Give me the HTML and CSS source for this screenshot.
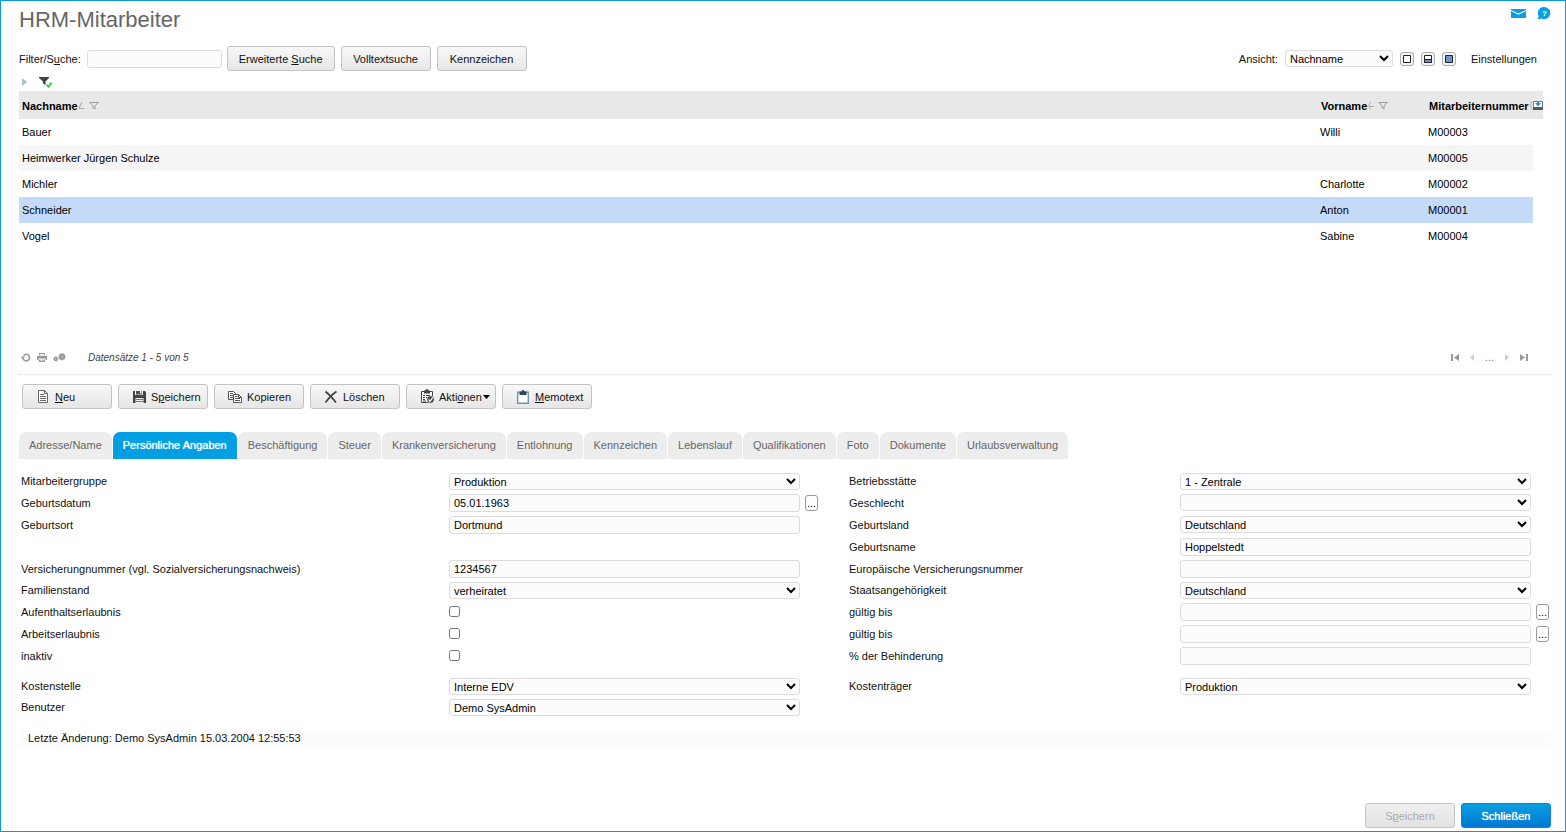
FILE: index.html
```html
<!DOCTYPE html>
<html lang="de">
<head>
  <meta charset="UTF-8">
  <title>HRM-Mitarbeiter</title>
  <meta name="viewport" content="width=device-width, initial-scale=1">
  <link rel="stylesheet" href="styles.css">
</head>
<body>

<div class="fenster">

  <header class="kopf">
    <h1>HRM-Mitarbeiter</h1>
    <div class="kopf-icons">
      <button class="icon-btn" aria-label="E-Mail">
        <svg width="15" height="9" viewBox="0 0 15 9"><path fill="#0a9fe0" d="M0 0h15v1L7.500 4.600 0 1z"/><path fill="#0a9fe0" d="M0 2l7.500 3.800L15 2v7H0z"/></svg>
      </button>
      <button class="icon-btn" aria-label="Hilfe">
        <svg width="14" height="13" viewBox="0 0 14 13"><path fill="#0a9fe0" d="M7.500 0a6 6 0 1 1-2.800 11.400L.5 12.500l1.300-3.300A6 6 0 0 1 7.500 0z"/><text x="7.500" y="9" text-anchor="middle" class="frage">?</text></svg>
      </button>
    </div>
  </header>

  <!-- Suche und Ansicht -->
  <div class="suchleiste">
    <label for="suche">Filter/S<u>u</u>che:</label>
    <input type="text" id="suche" class="feld suche">
    <button class="btn">Erweiterte <u>S</u>uche</button>
    <button class="btn">Volltextsuche</button>
    <button class="btn">Kennzeichen</button>

    <div class="ansicht">
      <label for="ansicht">Ansicht:</label>
      <select id="ansicht" class="feld"><option>Nachname</option></select>
      <div class="layouts">
        <button class="layout-btn" aria-label="Nur Liste"><svg width="8" height="8" viewBox="0 0 8 8"><path fill="#fff" stroke="#222" d="M.5.5h7v7h-7z"/></svg></button>
        <button class="layout-btn" aria-label="Geteilt"><svg width="8" height="8" viewBox="0 0 8 8"><path fill="#fff" stroke="#222" d="M.5.5h7v7h-7z"/><path fill="#6c8fc8" stroke="#222" d="M.5 4.500h7v3h-7z"/></svg></button>
        <button class="layout-btn" aria-label="Nur Maske"><svg width="8" height="8" viewBox="0 0 8 8"><path fill="#6c94cf" stroke="#222" d="M.5.5h7v7h-7z"/></svg></button>
      </div>
      <a href="#" class="einstellungen">Einstellungen</a>
    </div>
  </div>

  <div class="filterzeile">
    <svg width="5" height="8" viewBox="0 0 5 8"><path fill="#a9c0d0" d="M0 0l5 4-5 4z"/></svg>
    <svg width="14" height="12" viewBox="0 0 14 12"><path fill="#444" d="M0 1h10v1L6.500 5.500V9L4 7.500v-2L0 2z"/><path fill="none" stroke="#1fe01f" stroke-width="1.800" d="M7.500 8.500l2 2.300L12.500 6.500"/></svg>
  </div>

  <!-- Liste -->
  <div class="liste">
    <table>
      <colgroup><col><col class="schmal"><col class="schmal"><col class="spalten"></colgroup>
      <thead>
        <tr>
          <th>
            <div class="titel">
              <span>Nachname</span>
              <svg width="7" height="8" viewBox="0 0 7 8"><path fill="none" stroke="#aaa" d="M4 0L1 6.500h5"/></svg>
              <svg class="trichter" width="10" height="8" viewBox="0 0 10 8"><path fill="none" stroke="#999" d="M.8.500h8.400L6 4v3L4 5.800V4z"/></svg>
            </div>
          </th>
          <th>
            <div class="titel">
              <span>Vorname</span>
              <svg width="7" height="8" viewBox="0 0 7 8"><path fill="none" stroke="#aaa" d="M4 0Q0 3.500 4 7.500M2 4.500h5"/></svg>
              <svg class="trichter" width="10" height="8" viewBox="0 0 10 8"><path fill="none" stroke="#999" d="M.8.500h8.400L6 4v3L4 5.800V4z"/></svg>
            </div>
          </th>
          <th>
            <div class="titel">
              <span>Mitarbeiternummer</span>
              <svg width="4" height="9" viewBox="0 0 4 9"><path fill="none" stroke="#aaa" d="M3 0Q0 4 3 9"/></svg>
            </div>
          </th>
          <th class="spalten-icon">
            <svg width="10" height="9" viewBox="0 0 10 9"><path fill="#fff" stroke="#778" d="M.5.500h9v6h-9z"/><path fill="#1d9ad6" d="M4 0h2v2h2L5 5.500 2 2h2z"/><path fill="#556" d="M0 6h10v3H0z"/></svg>
          </th>
        </tr>
      </thead>
      <tbody>
        <tr><td>Bauer</td><td>Willi</td><td>M00003</td></tr>
        <tr><td>Heimwerker Jürgen Schulze</td><td></td><td>M00005</td></tr>
        <tr><td>Michler</td><td>Charlotte</td><td>M00002</td></tr>
        <tr class="gewaehlt"><td>Schneider</td><td>Anton</td><td>M00001</td></tr>
        <tr><td>Vogel</td><td>Sabine</td><td>M00004</td></tr>
      </tbody>
    </table>
  </div>

  <div class="listenfuss">
    <div class="fuss-icons">
      <button class="icon-btn" aria-label="Aktualisieren"><svg width="10" height="9" viewBox="0 0 10 9"><path fill="none" stroke="#999" stroke-width="1.600" d="M2 5.500a3.300 3.300 0 1 0 .6-3"/><path fill="#999" d="M0 3.500h4L2 6.500z"/></svg></button>
      <button class="icon-btn" aria-label="Drucken"><svg width="10" height="9" viewBox="0 0 10 9"><path fill="#999" d="M2 0h6v2.500H2zM0 3h10v4H8.500V5.500h-7V7H0zM2 6.500h6V9H2z"/><path fill="#fff" d="M3 1h4v1.500H3zM3 6.500h4v1H3z"/></svg></button>
      <button class="icon-btn" aria-label="Verarbeitung"><svg width="13" height="9" viewBox="0 0 13 9"><circle cx="2.800" cy="6" r="2.200" fill="#999" stroke="#aaa" stroke-dasharray="1 1"/><circle cx="9" cy="3.800" r="3.200" fill="#999" stroke="#aaa" stroke-dasharray="1 1"/><circle cx="2.800" cy="6" r=".7" fill="#ccc"/><circle cx="9" cy="3.800" r="1" fill="#bbb"/></svg></button>
    </div>
    <i class="anzahl">Datensätze 1 - 5 von 5</i>
    <div class="blaettern">
      <button class="icon-btn" aria-label="Erste Seite"><svg width="8" height="7" viewBox="0 0 8 7"><path fill="#999" d="M0 0h2v7H0zM8 0v7L3 3.500z"/></svg></button>
      <button class="icon-btn" aria-label="Vorherige Seite"><svg width="4" height="7" viewBox="0 0 4 7"><path fill="#ccc" d="M4 0v7L0 3.500z"/></svg></button>
      <span>...</span>
      <button class="icon-btn" aria-label="Nächste Seite"><svg width="4" height="7" viewBox="0 0 4 7"><path fill="#ccc" d="M0 0v7l4-3.500z"/></svg></button>
      <button class="icon-btn" aria-label="Letzte Seite"><svg width="8" height="7" viewBox="0 0 8 7"><path fill="#999" d="M6 0h2v7H6zM0 0v7l5-3.500z"/></svg></button>
    </div>
  </div>

  <!-- Aktionen zum Datensatz -->
  <div class="werkzeuge">
    <button class="btn mit-icon">
      <svg width="16" height="14" viewBox="0 0 16 14"><path fill="#fff" stroke="#666" d="M2.500.500h6l3 3v9h-9z"/><path fill="none" stroke="#666" d="M8.500.500v3h3M4 4.500h4M4 6.500h6M4 8.500h6M4 10.500h6"/></svg><span><u>N</u>eu</span>
    </button>
    <button class="btn mit-icon">
      <svg width="16" height="14" viewBox="0 0 16 14"><path fill="#444" d="M1 1h2v4h8V1h2l1 1v11H1z"/><path fill="#555" d="M4 1h6v3.500H4z"/><path fill="#eee" d="M8 1h1.500v2.500H8zM3.500 8h8v5h-8z"/><path stroke="#777" d="M4 9.500h7M4 11.500h7"/></svg><span>S<u>p</u>eichern</span>
    </button>
    <button class="btn mit-icon">
      <svg width="16" height="14" viewBox="0 0 16 14"><path fill="#fff" stroke="#555" d="M.5 1.500h5l2 2v6h-7z"/><path stroke="#555" d="M2 3.500h3M2 5.500h4M2 7.500h3"/><path fill="#fff" stroke="#555" d="M5.500 4.500h5l3 3v5h-8z"/><path fill="none" stroke="#555" d="M10.500 4.500v3h3M7 6.500h2.500M7 8.500h5M7 10.500h5"/></svg><span>Kopieren</span>
    </button>
    <button class="btn mit-icon">
      <svg width="16" height="14" viewBox="0 0 16 14"><path fill="none" stroke="#444" stroke-width="1.800" d="M1.500 1.500Q6 5 12 12.500M12.500 1.500Q7 5 1.500 12.500"/></svg><span>Löschen</span>
    </button>
    <button class="btn mit-icon">
      <svg width="16" height="15" viewBox="0 0 16 15"><path fill="#fff" stroke="#444" d="M1.500 2.500h11v11h-11z"/><path fill="#444" d="M4 1.500h1.500a1.500 1.500 0 0 1 3 0H10v3H4z"/><path stroke="#444" d="M3 6.500h2M6 6.500h4M3 8.500h2M6 8.500h2M3 10.500h2M3 12h3"/><circle cx="10.500" cy="10.500" r="3.700" fill="#444" stroke="#f2f2f2" stroke-width=".6"/><path fill="none" stroke="#fff" stroke-width="1.200" d="M8.500 10.500l1.600 1.700 2.600-3.500"/></svg><span>Akti<u>o</u>nen</span><svg class="pfeil" width="7" height="4" viewBox="0 0 7 4"><path d="M0 0h7L3.500 4z"/></svg>
    </button>
    <button class="btn mit-icon">
      <svg width="16" height="14" viewBox="0 0 16 14"><path fill="#fff" stroke="#7890a8" stroke-width="1.400" d="M1.700 2.200h10.600v11H1.700z"/><path fill="#2d4560" d="M3.500 1.500h2a1.500 1.500 0 0 1 3 0h2V5h-7z"/></svg><span><u>M</u>emotext</span>
    </button>
  </div>

  <nav class="reiter">
    <a href="#">Adresse/Name</a>
    <a href="#" class="aktiv">Persönliche Angaben</a>
    <a href="#">Beschäftigung</a>
    <a href="#">Steuer</a>
    <a href="#">Krankenversicherung</a>
    <a href="#">Entlohnung</a>
    <a href="#">Kennzeichen</a>
    <a href="#">Lebenslauf</a>
    <a href="#">Qualifikationen</a>
    <a href="#">Foto</a>
    <a href="#">Dokumente</a>
    <a href="#">Urlaubsverwaltung</a>
  </nav>

  <!-- Persönliche Angaben -->
  <form class="maske">
    <label class="links" for="gruppe">Mitarbeitergruppe</label>
    <select id="gruppe" class="feld"><option>Produktion</option></select>
    <label class="rechts" for="betrieb">Betriebsstätte</label>
    <select id="betrieb" class="feld"><option>1 - Zentrale</option></select>

    <label class="links" for="gebdatum">Geburtsdatum</label>
    <input type="text" id="gebdatum" class="feld" value="05.01.1963">
    <button type="button" class="mehr" aria-label="Datum wählen">...</button>
    <label class="rechts" for="geschlecht">Geschlecht</label>
    <select id="geschlecht" class="feld"><option></option></select>

    <label class="links" for="gebort">Geburtsort</label>
    <input type="text" id="gebort" class="feld" value="Dortmund">
    <label class="rechts" for="gebland">Geburtsland</label>
    <select id="gebland" class="feld"><option>Deutschland</option></select>

    <label class="rechts" for="gebname">Geburtsname</label>
    <input type="text" id="gebname" class="feld" value="Hoppelstedt">

    <label class="links" for="versnr">Versicherungnummer (vgl. Sozialversicherungsnachweis)</label>
    <input type="text" id="versnr" class="feld" value="1234567">
    <label class="rechts" for="euversnr">Europäische Versicherungsnummer</label>
    <input type="text" id="euversnr" class="feld">

    <label class="links" for="famstand">Familienstand</label>
    <select id="famstand" class="feld"><option>verheiratet</option></select>
    <label class="rechts" for="staat">Staatsangehörigkeit</label>
    <select id="staat" class="feld"><option>Deutschland</option></select>

    <label class="links" for="aufenthalt">Aufenthaltserlaubnis</label>
    <input type="checkbox" id="aufenthalt">
    <label class="rechts" for="gueltig1">gültig bis</label>
    <input type="text" id="gueltig1" class="feld">
    <button type="button" class="mehr" aria-label="Datum wählen">...</button>

    <label class="links" for="arbeit">Arbeitserlaubnis</label>
    <input type="checkbox" id="arbeit">
    <label class="rechts" for="gueltig2">gültig bis</label>
    <input type="text" id="gueltig2" class="feld">
    <button type="button" class="mehr" aria-label="Datum wählen">...</button>

    <label class="links" for="inaktiv">inaktiv</label>
    <input type="checkbox" id="inaktiv">
    <label class="rechts" for="behinderung">% der Behinderung</label>
    <input type="text" id="behinderung" class="feld">

    <div class="abstand"></div>

    <label class="links" for="kostenstelle">Kostenstelle</label>
    <select id="kostenstelle" class="feld"><option>Interne EDV</option></select>
    <label class="rechts" for="kostentraeger">Kostenträger</label>
    <select id="kostentraeger" class="feld"><option>Produktion</option></select>

    <label class="links" for="benutzer">Benutzer</label>
    <select id="benutzer" class="feld"><option>Demo SysAdmin</option></select>
  </form>

  <p class="aenderung">Letzte Änderung: Demo SysAdmin 15.03.2004 12:55:53</p>

  <footer class="fuss">
    <button class="btn" disabled>S<u>p</u>eichern</button>
    <button class="btn primaer">Schließen</button>
  </footer>

</div>

</body>
</html>
```
FILE: styles.css
```css
* {
  box-sizing: border-box;
}

body {
  margin: 0;
  font-family: Arial, "Liberation Sans", sans-serif;
  font-size: 11px;
  color: #111;
  background: #fff;
}

button, input, select {
  font-family: inherit;
  font-size: 11px;
  margin: 0;
}

svg {
  display: block;
  flex: none;
}

a {
  color: inherit;
  text-decoration: none;
}

.fenster {
  display: flex;
  flex-direction: column;
  min-height: 100vh;
  border: 1px solid #0a9ad7;
  padding: 6px 14px 3px 18px;
}

/* Kopf */
.kopf {
  display: flex;
  justify-content: space-between;
  align-items: flex-start;
}

.kopf h1 {
  margin: 0;
  font-size: 22px;
  line-height: 26px;
  font-weight: normal;
  color: #666;
}

.kopf-icons {
  display: flex;
  align-items: center;
  gap: 11px;
}

.icon-btn {
  border: none;
  background: none;
  padding: 0;
  cursor: pointer;
}

.frage {
  font-size: 8px;
  font-weight: bold;
  fill: #fff;
}

/* Felder und Knöpfe */
.feld {
  width: 100%;
  height: 18px;
  border: 1px solid #dcdcdc;
  border-radius: 3px;
  background-color: #fcfcfc;
  color: #000;
  padding: 0 4px;
}

select.feld {
  height: 17px;
  padding: 0;
}

.btn {
  height: 25px;
  min-width: 90px;
  padding: 0 11px;
  border: 1px solid #c3c3c3;
  border-radius: 3px;
  background: linear-gradient(#f8f8f8, #e6e6e6);
  color: #111;
  cursor: pointer;
}

.btn:hover {
  background: #eee;
}

.btn:disabled {
  color: #aaa;
  background: linear-gradient(#f0f0f0, #e2e2e2);
  cursor: default;
}

.btn.primaer {
  border-color: #0a84cc;
  background: linear-gradient(#0a9fe0, #0077d4);
  color: #fff;
  text-shadow: 0 0 1px #fff;
}

.btn.mit-icon {
  display: flex;
  align-items: center;
  gap: 3px;
  padding: 0 0 0 13px;
}

/* Suchleiste */
.suchleiste {
  display: flex;
  align-items: center;
  margin-top: 13px;
}

.suchleiste .btn {
  margin-right: 6px;
}

.suche {
  width: 135px;
  margin: 0 5px 0 6px;
}

.ansicht {
  display: flex;
  align-items: center;
  margin-left: auto;
  padding-right: 14px;
}

.ansicht select.feld {
  width: 108px;
  margin: 0 7px;
}

.layouts {
  display: flex;
  gap: 7px;
  margin-right: 15px;
}

.layout-btn {
  display: flex;
  align-items: center;
  justify-content: center;
  width: 14px;
  height: 14px;
  padding: 0;
  border: 1px solid #aaa;
  border-radius: 3px;
  background: #f4f4f4;
}

.filterzeile {
  display: flex;
  align-items: center;
  gap: 12px;
  height: 20px;
  padding: 2px 3px 0;
}

/* Liste */
.liste {
  min-height: 254px;
  padding-right: 8px;
}

.liste table {
  width: 100%;
  table-layout: fixed;
  border-collapse: collapse;
}

.schmal {
  width: 108px;
}

.spalten {
  width: 10px;
}

.liste th {
  height: 28px;
  padding: 1px 0 0 4px;
  background: #e8e8e8;
  color: #000;
  text-align: left;
  white-space: nowrap;
}

.liste th:first-child {
  padding-left: 3px;
}

.titel {
  display: flex;
  align-items: center;
}

.titel .trichter {
  margin-left: 4px;
}

.liste th.spalten-icon {
  padding: 0;
}

.liste td {
  height: 26px;
  padding: 0 3px;
  color: #000;
}

.liste tr:nth-child(even) td {
  background: #f5f5f5;
}

.liste tr.gewaehlt td {
  background: #c4daf9;
}

.listenfuss {
  display: flex;
  align-items: center;
  height: 30px;
  padding: 0 23px 5px 2px;
  border-bottom: 1px dotted #ddd;
}

.fuss-icons {
  display: flex;
  align-items: center;
  gap: 6px;
  margin-right: 22px;
}

.anzahl {
  font-size: 10px;
  color: #444;
}

.blaettern {
  display: flex;
  align-items: center;
  gap: 11px;
  margin-left: auto;
  color: #777;
}

/* Werkzeugleiste */
.werkzeuge {
  display: flex;
  gap: 6px;
  padding: 9px 3px 0;
}

.werkzeuge .pfeil {
  margin-left: -2px;
}

/* Reiter */
.reiter {
  display: flex;
  gap: 1px;
  margin-top: 23px;
}

.reiter a {
  padding: 0 10px;
  line-height: 27px;
  border-radius: 7px 7px 0 0;
  background: #ededed;
  color: #666;
  white-space: nowrap;
}

.reiter a.aktiv {
  background: #009ee3;
  color: #fff;
  text-shadow: 0 0 1px #fff;
}

/* Maske */
.maske {
  display: grid;
  grid-template-columns: 428fr 351fr 49px 331fr 351fr 20px;
  row-gap: 4px;
  align-items: start;
  padding-left: 2px;
  margin-top: 14px;
}

.maske label {
  align-self: end;
  line-height: 17px;
  white-space: nowrap;
}

.maske .links {
  grid-column: 1;
}

.maske .rechts {
  grid-column: 4;
}

.maske input[type="checkbox"] {
  width: 11px;
  height: 11px;
  margin-top: 3px;
}

.mehr {
  width: 13px;
  height: 16px;
  margin: 1px 0 0 5px;
  padding: 0;
  border: 1px solid #999;
  border-radius: 3px;
  background: #fff;
}

.abstand {
  grid-column: 1 / -1;
  height: 5px;
}

.aenderung {
  margin: 14px 0 0;
  padding-left: 9px;
  line-height: 17px;
  background: #fcfcfc;
}

.fuss {
  display: flex;
  justify-content: flex-end;
  gap: 6px;
  margin-top: auto;
}
```
